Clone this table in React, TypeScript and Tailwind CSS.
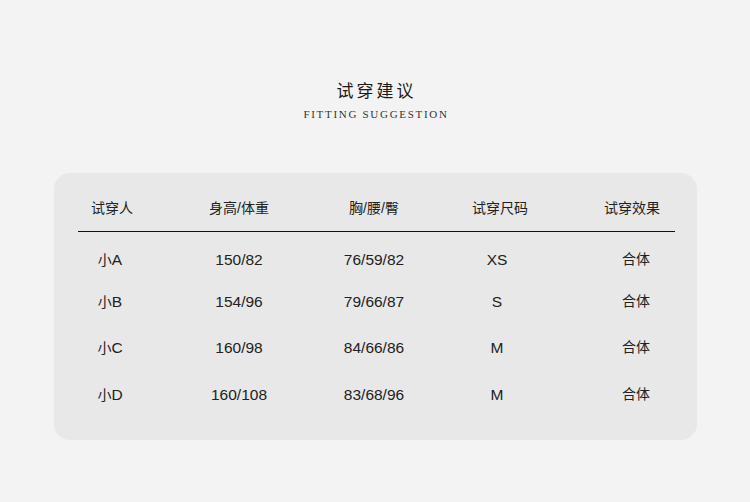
const headers = ["试穿人", "身高/体重", "胸/腰/臀", "试穿尺码", "试穿效果"];

const rows = [
  { name: "小", tag: "A", hw: "150/82", body: "76/59/82", size: "XS", fit: "合体", mt: "mt-[16px]" },
  { name: "小", tag: "B", hw: "154/96", body: "79/66/87", size: "S", fit: "合体", mt: "mt-[26px]" },
  { name: "小", tag: "C", hw: "160/98", body: "84/66/86", size: "M", fit: "合体", mt: "mt-[30px]" },
  { name: "小", tag: "D", hw: "160/108", body: "83/68/96", size: "M", fit: "合体", mt: "mt-[31px]" },
];

const cols = "grid grid-cols-[68px_186px_84px_168px_96px]";

export default function App() {
  return (
    <div
      className="w-[750px] h-[502px] bg-[#f3f3f3] text-[#222] overflow-hidden"
      style={{ fontFamily: '"Liberation Sans", Arial, "Noto Sans CJK SC", sans-serif' }}
    >
      {/* Title */}
      <div className="pt-[82px] flex flex-col items-center">
        <h1 className="text-[17px] leading-[20px] tracking-[3px] pl-[3px] text-[#1a1a1a]">试穿建议</h1>
        <p
          className="mt-[5px] text-[11px] leading-[14px] tracking-[1.7px] pl-[2px] text-[#333]"
          style={{ fontFamily: '"Liberation Serif", "Times New Roman", serif' }}
        >
          FITTING SUGGESTION
        </p>
      </div>

      {/* Table card */}
      <div className="mt-[52px] ml-[54px] w-[643px] h-[267px] bg-[#e8e8e8] rounded-[16px] pt-[25px] pl-[24px]">
        <div className={`${cols} h-[18px] items-center text-[14px] text-center`}>
          {headers.map((h) => (
            <div key={h}>{h}</div>
          ))}
        </div>
        <div className="mt-[15px] w-[597px] h-px bg-[#111]" />
        {rows.map((r) => (
          <div key={r.tag} className={`${cols} ${r.mt} h-[16px] items-center text-[15.5px] text-center`}>
            <div className="pr-[4px]">
              <span className="text-[14px]">{r.name}</span>
              {r.tag}
            </div>
            <div>{r.hw}</div>
            <div>{r.body}</div>
            <div className="pr-[6px]">{r.size}</div>
            <div className="pl-[8px] text-[14px]">{r.fit}</div>
          </div>
        ))}
      </div>
    </div>
  );
}
